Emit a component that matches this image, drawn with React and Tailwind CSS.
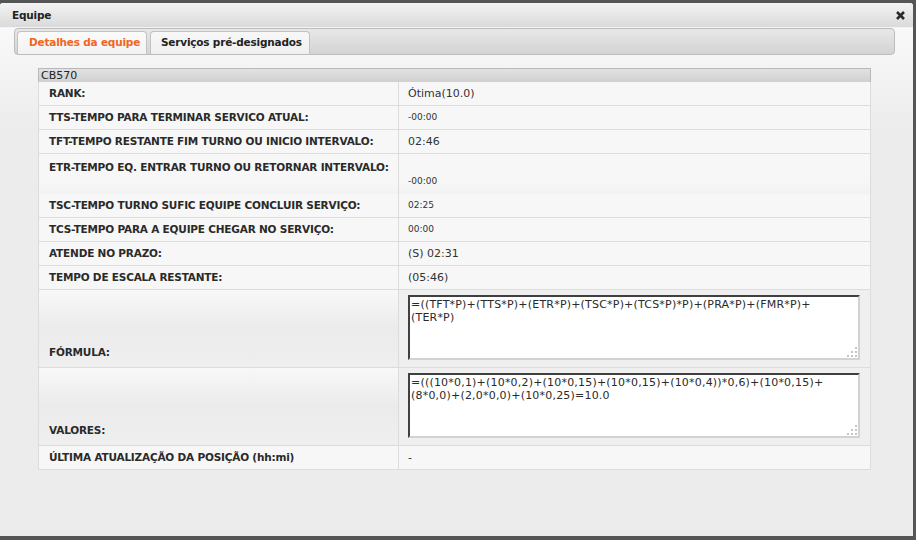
import React from 'react';

const rows = [
  { label: 'RANK:', value: 'Ótima(10.0)' },
  { label: 'TTS-TEMPO PARA TERMINAR SERVICO ATUAL:', value: '-00:00', small: true },
  { label: 'TFT-TEMPO RESTANTE FIM TURNO OU INICIO INTERVALO:', value: '02:46' },
];

const rows2 = [
  { label: 'TSC-TEMPO TURNO SUFIC EQUIPE CONCLUIR SERVIÇO:', value: '02:25', small: true },
  { label: 'TCS-TEMPO PARA A EQUIPE CHEGAR NO SERVIÇO:', value: '00:00', small: true },
  { label: 'ATENDE NO PRAZO:', value: '(S) 02:31' },
  { label: 'TEMPO DE ESCALA RESTANTE:', value: '(05:46)' },
];

const Grip = () => (
  <svg width="10" height="10" viewBox="0 0 10 10" className="absolute right-[1px] bottom-[1px]">
    <rect x="8" y="0" width="2" height="2" fill="#c4c4c4" />
    <rect x="4" y="4" width="2" height="2" fill="#c4c4c4" />
    <rect x="8" y="4" width="2" height="2" fill="#c4c4c4" />
    <rect x="0" y="8" width="2" height="2" fill="#c4c4c4" />
    <rect x="4" y="8" width="2" height="2" fill="#c4c4c4" />
    <rect x="8" y="8" width="2" height="2" fill="#c4c4c4" />
  </svg>
);

const labelText = 'text-[10.5px] tracking-[-0.2px] font-bold text-[#2a2a2a] whitespace-nowrap';

const Row = ({ label, value, small }) => (
  <div className="flex h-[24px] border-b border-[#dcdcdc] bg-[#f7f7f7]">
    <div className={`w-[360px] shrink-0 border-r border-[#dcdcdc] pl-[10px] pt-px flex items-center ${labelText}`}>
      {label}
    </div>
    <div className={`pl-[9px] pt-px flex items-center text-[#333] ${small ? 'text-[9px]' : 'text-[11px]'}`}>
      {value}
    </div>
  </div>
);

const BoxRow = ({ label, text }) => (
  <div className="flex h-[78px] border-b border-[#dcdcdc]">
    <div className={`w-[360px] shrink-0 border-r border-[#dcdcdc] pl-[10px] pb-[6px] flex items-end bg-gradient-to-b from-[#f8f8f8] via-[#ebebeb] to-[#efefef] ${labelText}`}>
      {label}
    </div>
    <div className="flex-1 bg-[#efefef] pl-[9px] pt-[5px]">
      <div className="relative w-[452px] h-[65px] bg-white border-2 border-t-[#404040] border-l-[#404040] border-r-[#d2d2d2] border-b-[#d2d2d2] px-[1px] pt-[1px] text-[11px] tracking-[0.2px] leading-[13px] text-[#2a2a2a] whitespace-pre">
        {text}
        <Grip />
      </div>
    </div>
  </div>
);

export default function App() {
  return (
    <div className="w-[916px] h-[540px] bg-[#555] pt-[3px] font-['DejaVu_Sans',Verdana,sans-serif] overflow-hidden">
      <div className="w-[913px] h-[533px] bg-[#ececec] rounded-t-[3px] flex flex-col">
        <div className="h-[25px] flex items-center justify-between pl-[12px] pr-[8px] pt-px bg-gradient-to-b from-[#f3f3f3] to-[#dadada] border-b border-[#f4f4f4] rounded-t-[3px]">
          <span className="text-[10.5px] tracking-[-0.2px] font-bold text-[#222] whitespace-nowrap">Equipe</span>
          <svg width="9" height="9" viewBox="0 0 9 9">
            <path d="M1 1 L8 8 M8 1 L1 8" stroke="#2a2a2a" strokeWidth="2.6" />
          </svg>
        </div>

        <div className="flex-1 bg-gradient-to-b from-[#f9f9f9] to-[#ececec] to-[20%] px-[14px]">
          <div className="w-[881px] h-[27px] rounded-[4px] border border-[#bcbcbc] bg-gradient-to-b from-[#e8e8e8] to-[#d3d3d3] flex items-end gap-[3px] pl-[2px]">
            <div className="w-[130px] h-[23px] rounded-t-[4px] border border-b-0 border-[#c2c2c2] bg-gradient-to-b from-[#fbfbfb] to-[#f2f2f2] pl-[11px] flex items-center text-[10.5px] tracking-[-0.2px] whitespace-nowrap font-bold text-[#f26522]">
              Detalhes da equipe
            </div>
            <div className="w-[160px] h-[23px] rounded-t-[4px] border border-b-0 border-[#c2c2c2] bg-gradient-to-b from-[#f8f8f8] to-[#efefef] pl-[10px] flex items-center text-[10.5px] tracking-[-0.2px] whitespace-nowrap font-bold text-[#222]">
              Serviços pré-designados
            </div>
          </div>

          <div className="ml-[24px] mt-[13px] w-[833px] border-l border-r border-[#dcdcdc]">
            <div className="h-[14px] -mx-px border border-[#b8b8b8] border-b-[#cfcfcf] bg-gradient-to-b from-[#e2e2e2] to-[#d2d2d2] pl-[2px] flex items-center text-[11px] text-[#222] leading-none">
              CB570
            </div>
            {rows.map((r) => (
              <Row key={r.label} {...r} />
            ))}
            <div className="flex h-[40px] bg-gradient-to-b from-[#f7f7f7] from-[70%] to-[#f2f2f2]">
              <div className={`w-[360px] shrink-0 border-r border-[#dcdcdc] pl-[10px] pt-[6px] ${labelText}`}>
                ETR-TEMPO EQ. ENTRAR TURNO OU RETORNAR INTERVALO:
              </div>
              <div className="pl-[9px] pb-[6px] flex items-end text-[9px] text-[#333]">-00:00</div>
            </div>
            {rows2.map((r) => (
              <Row key={r.label} {...r} />
            ))}
            <BoxRow label="FÓRMULA:" text={'=((TFT*P)+(TTS*P)+(ETR*P)+(TSC*P)+(TCS*P)*P)+(PRA*P)+(FMR*P)+\n(TER*P)'} />
            <BoxRow label="VALORES:" text={'=(((10*0,1)+(10*0,2)+(10*0,15)+(10*0,15)+(10*0,4))*0,6)+(10*0,15)+\n(8*0,0)+(2,0*0,0)+(10*0,25)=10.0'} />
            <Row label="ÚLTIMA ATUALIZAÇÃO DA POSIÇÃO (hh:mi)" value="-" />
          </div>
        </div>
      </div>
    </div>
  );
}
